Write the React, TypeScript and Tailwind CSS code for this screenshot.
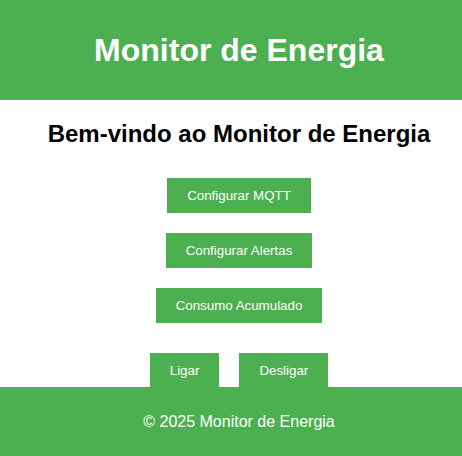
export default function App() {
  return (
    <div className="h-[456px] overflow-hidden bg-white">
      <div
        className="relative h-[456px] w-[478px] bg-white"
        style={{ fontFamily: '"Liberation Sans", Arial, sans-serif' }}
      >
        <header className="flex h-[100px] items-center justify-center bg-[#4CAF50]">
          <h1 className="text-[32px] font-bold leading-[37px] text-white">Monitor de Energia</h1>
        </header>

        <main className="flex flex-col items-center">
          <h2 className="mt-[20px] text-[24px] font-bold leading-[28px] text-black">
            Bem-vindo ao Monitor de Energia
          </h2>

          <div className="mt-[30px] flex flex-col items-center gap-[20px]">
            <button className="bg-[#4CAF50] px-[20px] py-[10px] text-[13.33px] leading-[15px] text-white">
              Configurar MQTT
            </button>
            <button className="bg-[#4CAF50] px-[20px] py-[10px] text-[13.33px] leading-[15px] text-white">
              Configurar Alertas
            </button>
            <button className="bg-[#4CAF50] px-[20px] py-[10px] text-[13.33px] leading-[15px] text-white">
              Consumo Acumulado
            </button>
          </div>

          <div className="mt-[30px] flex gap-[20px]">
            <button className="bg-[#4CAF50] px-[20px] py-[10px] text-[13.33px] leading-[15px] text-white">
              Ligar
            </button>
            <button className="bg-[#4CAF50] px-[20px] py-[10px] text-[13.33px] leading-[15px] text-white">
              Desligar
            </button>
          </div>
        </main>

        <footer className="absolute bottom-0 left-0 right-0 flex h-[69px] items-center justify-center bg-[#4CAF50]">
          <p className="text-[16px] leading-[18px] text-white">© 2025 Monitor de Energia</p>
        </footer>
      </div>
    </div>
  );
}
